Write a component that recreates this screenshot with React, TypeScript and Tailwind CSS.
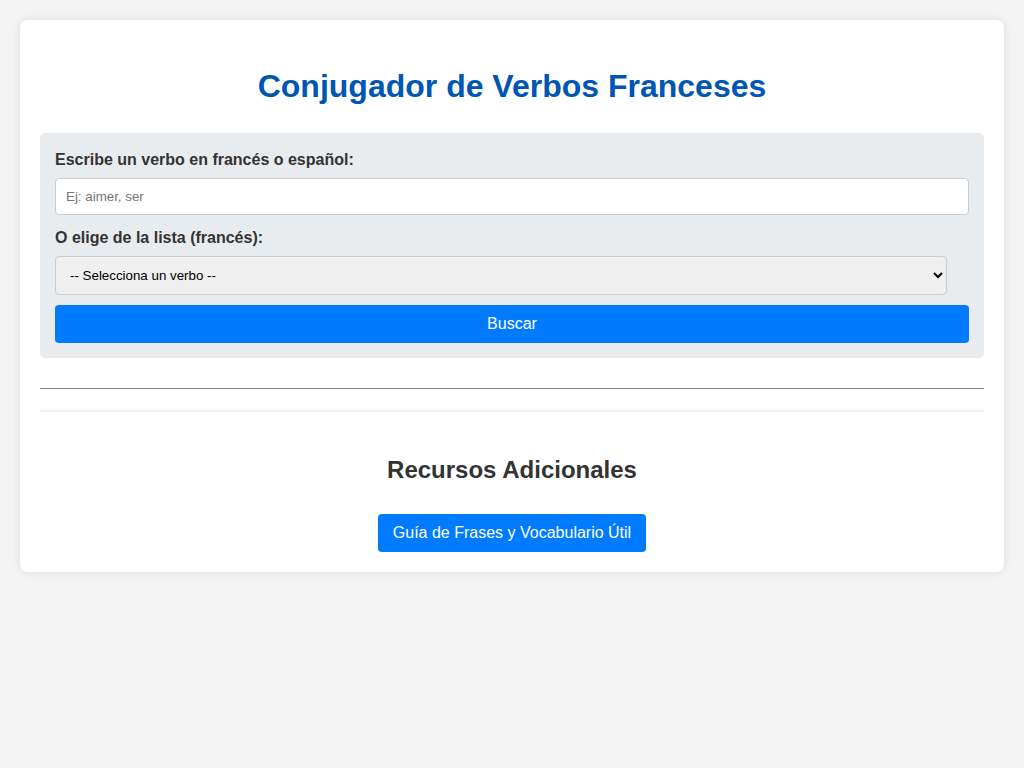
import { useState } from "react";

const VERBS = ["aimer", "être", "avoir", "aller", "faire", "venir", "pouvoir"];

export default function App() {
  const [query, setQuery] = useState("");
  const [verb, setVerb] = useState("");

  return (
    <div className="min-h-screen bg-[#f4f4f4] p-5 font-['Liberation_Sans',Arial,sans-serif] text-[#333]">
      <div className="rounded-lg bg-white p-5 shadow-[0_0_10px_rgba(0,0,0,0.1)]">
        <h1 className="mt-[28px] mb-[28px] text-center text-[32px] leading-[37px] font-bold text-[#0056b3]">
          Conjugador de Verbos Franceses
        </h1>

        <div className="rounded-[5px] bg-[#e9ecef] p-[15px]">
          <label className="mt-[3px] mb-[9px] block text-base leading-[18px] font-bold">
            Escribe un verbo en francés o español:
          </label>
          <input
            className="block h-[37px] w-full rounded border border-[#ccc] bg-white px-[10px] text-[13.33px] outline-none placeholder:text-[#757575]"
            placeholder="Ej: aimer, ser"
            value={query}
            onChange={(e) => setQuery(e.target.value)}
          />
          <label className="mt-[14px] mb-[9px] block text-base leading-[18px] font-bold">
            O elige de la lista (francés):
          </label>
          <select
            className="block h-[39px] w-[892px] rounded border border-[#ccc] bg-[#efefef] px-[10px] text-[13.33px] text-black"
            value={verb}
            onChange={(e) => setVerb(e.target.value)}
          >
            <option value="">-- Selecciona un verbo --</option>
            {VERBS.map((v) => (
              <option key={v} value={v}>
                {v}
              </option>
            ))}
          </select>
          <button
            type="button"
            className="mt-[10px] block h-[38px] w-full rounded bg-[#007bff] text-base text-white"
          >
            Buscar
          </button>
        </div>

        <hr className="mt-[30px] border-t-[1.5px] border-[#8a8a8a]" />
        <div className="mt-[21px] border-t-2 border-[#f2f2f2]" />

        <h2 className="mt-[44px] text-center text-2xl leading-[28px] font-bold text-[#333]">
          Recursos Adicionales
        </h2>
        <div className="mt-[30px] flex justify-center">
          <button
            type="button"
            className="h-[38px] rounded bg-[#007bff] px-[15px] text-base text-white"
          >
            Guía de Frases y Vocabulario Útil
          </button>
        </div>
      </div>
    </div>
  );
}
